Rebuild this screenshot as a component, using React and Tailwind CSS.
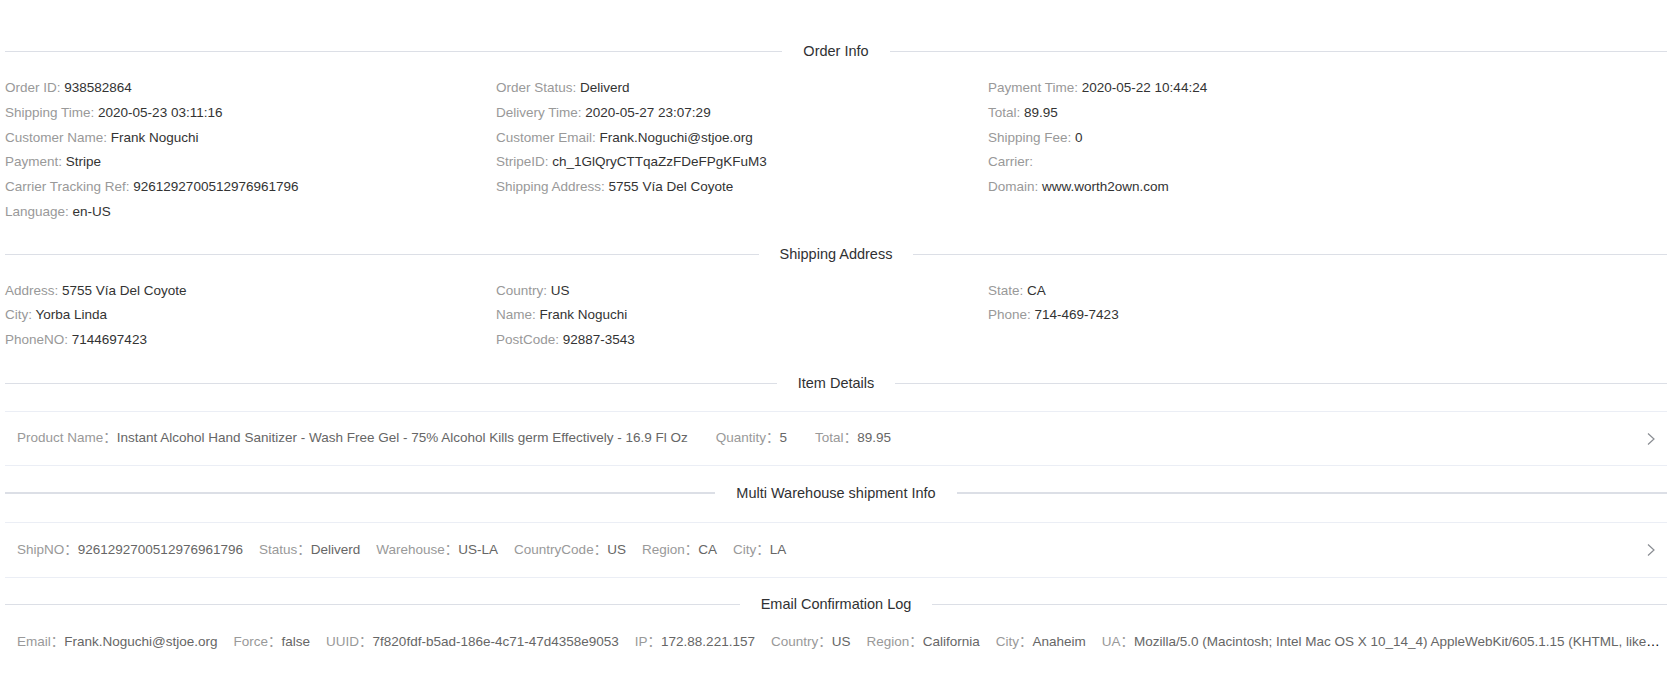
import React from 'react'

const orderInfo = [
  [
    ['Order ID', '938582864'],
    ['Shipping Time', '2020-05-23 03:11:16'],
    ['Customer Name', 'Frank Noguchi'],
    ['Payment', 'Stripe'],
    ['Carrier Tracking Ref', '9261292700512976961796'],
    ['Language', 'en-US'],
  ],
  [
    ['Order Status', 'Deliverd'],
    ['Delivery Time', '2020-05-27 23:07:29'],
    ['Customer Email', 'Frank.Noguchi@stjoe.org'],
    ['StripeID', 'ch_1GlQryCTTqaZzFDeFPgKFuM3'],
    ['Shipping Address', '5755 Vía Del Coyote'],
  ],
  [
    ['Payment Time', '2020-05-22 10:44:24'],
    ['Total', '89.95'],
    ['Shipping Fee', '0'],
    ['Carrier', ''],
    ['Domain', 'www.worth2own.com'],
  ],
]

const shippingAddress = [
  [
    ['Address', '5755 Vía Del Coyote'],
    ['City', 'Yorba Linda'],
    ['PhoneNO', '7144697423'],
  ],
  [
    ['Country', 'US'],
    ['Name', 'Frank Noguchi'],
    ['PostCode', '92887-3543'],
  ],
  [
    ['State', 'CA'],
    ['Phone', '714-469-7423'],
  ],
]

const itemFields = [
  ['Product Name', 'Instant Alcohol Hand Sanitizer - Wash Free Gel - 75% Alcohol Kills germ Effectively - 16.9 Fl Oz'],
  ['Quantity', '5'],
  ['Total', '89.95'],
]

const shipFields = [
  ['ShipNO', '9261292700512976961796'],
  ['Status', 'Deliverd'],
  ['Warehouse', 'US-LA'],
  ['CountryCode', 'US'],
  ['Region', 'CA'],
  ['City', 'LA'],
]

const emailFields = [
  ['Email', 'Frank.Noguchi@stjoe.org'],
  ['Force', 'false'],
  ['UUID', '7f820fdf-b5ad-186e-4c71-47d4358e9053'],
  ['IP', '172.88.221.157'],
  ['Country', 'US'],
  ['Region', 'California'],
  ['City', 'Anaheim'],
  ['UA', 'Mozilla/5.0 (Macintosh; Intel Mac OS X 10_14_4) AppleWebKit/605.1.15 (KHTML, like Gecko) Version/13.1 Safari/605.1.15'],
]

function Divider({ title, thick, className = '' }) {
  const line = thick ? 'h-[2px] flex-1 bg-[#dcdfe6]' : 'h-px flex-1 bg-[#dcdfe6]'
  return (
    <div className={`flex items-center ${thick ? 'h-[22px]' : 'h-[21px]'} ${className}`}>
      <div className={line} />
      <span className="px-[21px] text-[14.5px] leading-[21px] text-[#303133]">{title}</span>
      <div className={line} />
    </div>
  )
}

function InfoGrid({ columns, className = '' }) {
  return (
    <div className={`grid grid-cols-[491px_492px_1fr] text-[13.5px] leading-[24.75px] ${className}`}>
      {columns.map((col, i) => (
        <div key={i}>
          {col.map(([label, value]) => (
            <div key={label} className="whitespace-nowrap">
              <span className="text-[#999999]">{label}: </span>
              <span className="text-[#333333]">{value}</span>
            </div>
          ))}
        </div>
      ))}
    </div>
  )
}

function ChevronRight() {
  return (
    <svg width="14" height="14" viewBox="0 0 14 14" fill="none" className="shrink-0">
      <path d="M4 1.5L10 7L4 12.5" stroke="#8a8d93" strokeWidth="1.2" />
    </svg>
  )
}

function Field({ label, value, gap }) {
  return (
    <span className={gap}>
      <span className="text-[#999999]">{label}：</span>
      <span className="text-[#666666]">{value}</span>
    </span>
  )
}

export default function App() {
  return (
    <div className="min-h-screen bg-white pl-[5px] pr-[6px] pt-[41px] font-['Liberation_Sans','Noto_Sans_CJK_SC',sans-serif]">
      <Divider title="Order Info" />
      <InfoGrid columns={orderInfo} className="mt-[14px]" />

      <Divider title="Shipping Address" className="mt-[19.5px]" />
      <InfoGrid columns={shippingAddress} className="mt-[13.5px]" />

      <Divider title="Item Details" className="mt-[20.25px]" />
      <div className="mt-[17px] flex h-[55px] items-center border-y border-[#ebeef5] pl-3 pr-[9px] text-[13.5px]">
        <div className="min-w-0 flex-1 whitespace-nowrap">
          {itemFields.map(([label, value]) => (
            <Field key={label} label={label} value={value} gap="mr-7" />
          ))}
        </div>
        <ChevronRight />
      </div>

      <Divider title="Multi Warehouse shipment Info" thick className="mt-4" />
      <div className="mt-[18px] flex h-[56px] items-center border-y border-[#ebeef5] pl-3 pr-[9px] text-[13.5px]">
        <div className="min-w-0 flex-1 whitespace-nowrap">
          {shipFields.map(([label, value]) => (
            <Field key={label} label={label} value={value} gap="mr-4" />
          ))}
        </div>
        <ChevronRight />
      </div>

      <Divider title="Email Confirmation Log" className="mt-4" />
      <div className="flex h-[55px] items-center pl-3 pr-[5px] text-[13.5px]">
        <div className="min-w-0 flex-1 overflow-hidden text-ellipsis whitespace-nowrap">
          {emailFields.map(([label, value]) => (
            <Field key={label} label={label} value={value} gap="mr-4" />
          ))}
        </div>
      </div>
    </div>
  )
}
